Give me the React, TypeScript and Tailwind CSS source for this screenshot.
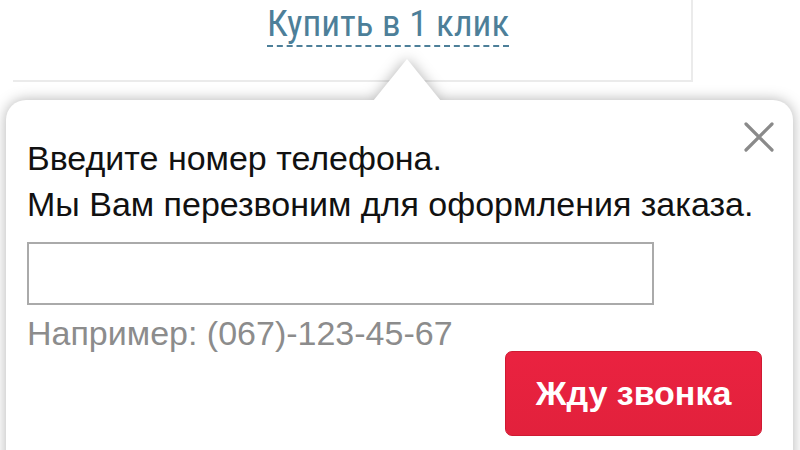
export default function App() {
  return (
    <div
      className="relative w-[800px] h-[450px] overflow-hidden bg-white"
      style={{ fontFamily: '"Liberation Sans", Arial, sans-serif' }}
    >
      {/* product card edge with the quick-order link */}
      <div className="ml-[13px] w-[680px] h-[82px] border-r-2 border-b-2 border-[#ebebeb] pt-[4px]">
        <a
          href="#"
          className="ml-[254px] inline-block text-[37px] leading-[40px] text-[#4d7f99] border-b-2 border-dashed border-[#4d7f99] pb-[1px]"
          style={{ fontFamily: '"Liberation Sans Narrow", "Roboto Condensed", "Liberation Sans", sans-serif' }}
        >
          Купить в 1 клик
        </a>
      </div>

      {/* callback popover */}
      <div className="relative mt-[18px] ml-[6px] mr-[7px] drop-shadow-[0_0_7px_rgba(0,0,0,0.3)]">
        <div className="absolute left-[367px] -top-[41px] w-0 h-0 border-l-[34px] border-r-[34px] border-b-[42px] border-l-transparent border-r-transparent border-b-white" />
        <div className="relative h-[400px] rounded-t-[20px] bg-white px-[21px] pt-[35px]">
          <button className="absolute right-[19px] top-[22px] text-[#8a8a8a]">
            <svg width="30" height="30" viewBox="0 0 30 30" fill="none" stroke="currentColor" strokeWidth="3.2" strokeLinecap="round">
              <path d="M2 2 L28 28 M28 2 L2 28" />
            </svg>
          </button>
          <p className="text-[34px] leading-[46px] text-[#111]">
            Введите номер телефона.
            <br />
            Мы Вам перезвоним для оформления заказа.
          </p>
          <input
            type="text"
            className="mt-[15px] block w-[627px] h-[63px] border-2 border-[#aaaaaa] bg-white outline-none px-3 text-[24px]"
          />
          <div className="mt-[10px] text-[34px] leading-[36px] text-[#8c8c8c]">
            Например: (067)-123-45-67
          </div>
          <div className="flex justify-end pr-[10px]">
            <button className="w-[257px] h-[85px] rounded-[7px] border border-[#cf1a32] bg-gradient-to-b from-[#ea2240] to-[#e2213c] text-white font-bold text-[34px]">
              Жду звонка
            </button>
          </div>
        </div>
      </div>
    </div>
  );
}
